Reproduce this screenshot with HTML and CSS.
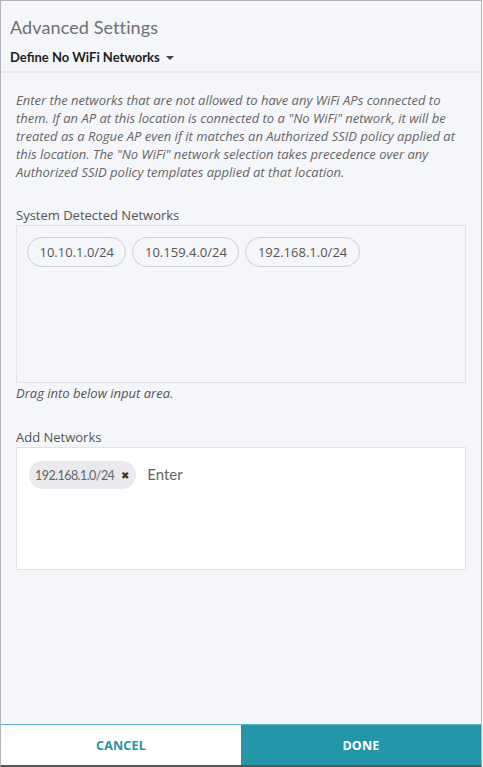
FILE: index.html
```html
<!DOCTYPE html>
<html>
<head>
<meta charset="utf-8">
<link rel="stylesheet" href="styles.css">
</head>
<body>
<div class="panel">
  <div class="header">
    <h1 class="title">Advanced Settings</h1>
    <div class="subtitle">Define No WiFi Networks <span class="caret"></span></div>
  </div>
  <div class="content">
    <p class="desc">Enter the networks that are not allowed to have any WiFi APs connected to them. If an AP at this location is connected to a "No WiFi" network, it will be treated as a Rogue AP even if it matches an Authorized SSID policy applied at this location. The "No WiFi" network selection takes precedence over any Authorized SSID policy templates applied at that location.</p>
    <div class="label">System Detected Networks</div>
    <div class="detected">
      <span class="chip">10.10.1.0/24</span>
      <span class="chip">10.159.4.0/24</span>
      <span class="chip">192.168.1.0/24</span>
    </div>
    <div class="hint">Drag into below input area.</div>
    <div class="label label-add">Add Networks</div>
    <div class="input-box">
      <span class="tag">192.168.1.0/24 <span class="x">&#x2716;</span></span>
      <span class="enter">Enter</span>
    </div>
  </div>
  <div class="footer">
    <button class="btn cancel">CANCEL</button>
    <button class="btn done">DONE</button>
  </div>
</div>
</body>
</html>
```
FILE: styles.css
```css
html, body {
  margin: 0;
  padding: 0;
  background: #ffffff;
}
body {
  width: 483px;
  height: 767px;
}
.panel {
  box-sizing: border-box;
  width: 482px;
  height: 767px;
  border: 1px solid #b4b4b8;
  border-bottom: 2px solid #555;
  background: #f5f6fa;
  display: flex;
  flex-direction: column;
  font-family: "Open Sans", sans-serif;
}
.header {
  padding: 0 9px;
  border-bottom: 2px solid #e9e9ee;
  height: 72px;
  box-sizing: border-box;
}
.title {
  margin: 0;
  padding-top: 15px;
  font-family: "Lato", sans-serif;
  font-weight: 400;
  font-size: 18px;
  color: #707070;
  line-height: 22px;
  letter-spacing: 0.1px;
}
.subtitle {
  margin-top: 11px;
  font-family: "Lato", sans-serif;
  font-weight: 700;
  font-size: 13px;
  color: #1e1e1e;
  line-height: 16px;
  display: flex;
  align-items: center;
}
.caret {
  display: inline-block;
  width: 0;
  height: 0;
  margin-left: 6px;
  margin-top: 2px;
  border-left: 4px solid transparent;
  border-right: 4px solid transparent;
  border-top: 4px solid #444;
}
.content {
  flex: 1;
  padding: 0 15px;
}
.desc {
  margin: 18px 0 0 0;
  font-style: italic;
  font-size: 13px;
  line-height: 18px;
  color: #666;
}
.label {
  margin-top: 26px;
  font-size: 13px;
  line-height: 16px;
  color: #555;
}
.label-add {
  margin-top: 27px;
}
.detected {
  margin-top: 2px;
  height: 158px;
  box-sizing: border-box;
  border: 1px solid #e2e2e8;
  background: #f5f6fa;
  padding: 11px 10px;
  display: flex;
  align-items: flex-start;
  gap: 6px;
}
.chip {
  display: inline-block;
  height: 30px;
  line-height: 28px;
  box-sizing: border-box;
  border: 1px solid #cfcfd4;
  border-radius: 15px;
  padding: 0 11.5px;
  font-size: 13px;
  color: #555;
  background: #f5f6fa;
}
.hint {
  margin-top: 1px;
  font-style: italic;
  font-size: 13px;
  line-height: 18px;
  color: #555;
}
.input-box {
  margin-top: 2px;
  height: 123px;
  box-sizing: border-box;
  border: 1px solid #e2e2e8;
  background: #fff;
  padding: 13px 12px;
  display: flex;
  align-items: flex-start;
}
.tag {
  display: inline-flex;
  align-items: center;
  height: 28px;
  border-radius: 14px;
  background: #e9e9ee;
  padding: 0 7px 0 6px;
  font-family: "Lato", sans-serif;
  font-size: 12.5px;
  letter-spacing: -0.55px;
  color: #666;
}
.x {
  margin-left: 7px;
  font-size: 10px;
  color: #333;
  letter-spacing: 0;
}
.enter {
  margin-left: 11px;
  font-family: "Lato", sans-serif;
  font-size: 15px;
  line-height: 26px;
  color: #666;
}
.footer {
  display: flex;
  height: 41px;
  box-sizing: border-box;
  border-top: 1px solid #5cb8c8;
}
.btn {
  flex: 1;
  border: none;
  margin: 0;
  font-family: "Open Sans", sans-serif;
  font-weight: 700;
  font-size: 12.5px;
  letter-spacing: 0.2px;
  cursor: pointer;
}
.cancel {
  background: #fff;
  color: #2495aa;
}
.done {
  background: #2396aa;
  color: #fff;
}
```
